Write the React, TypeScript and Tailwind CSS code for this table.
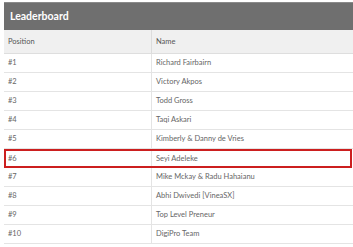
import React from "react";

const rows = [
  "Richard Fairbairn",
  "Victory Akpos",
  "Todd Gross",
  "Taqi Askari",
  "Kimberly & Danny de Vries",
  "Seyi Adeleke",
  "Mike Mckay & Radu Hahaianu",
  "Abhi Dwivedi [VineaSX]",
  "Top Level Preneur",
  "DigiPro Team",
];

const App: React.FC = () => {
  return (
    <div
      className="w-[353px] h-[247px] bg-white pt-[2px] pl-[4px] overflow-hidden"
      style={{ fontFamily: "Lato, 'Open Sans', sans-serif" }}
    >
      <div className="h-[28px] bg-[#6f6f6f] border-t border-[#8a8a8a] flex items-center pl-[6px]">
        <span className="text-white font-bold text-[10.5px]">Leaderboard</span>
      </div>
      <div className="grid grid-cols-[148px_1fr] h-[24px] bg-[#f0f0f0] border-b border-[#dedede] text-[7.5px] text-[#555]">
        <div className="flex items-center pl-[4px] border-r border-[#dcdcdc]">Position</div>
        <div className="flex items-center pl-[4px]">Name</div>
      </div>
      {rows.map((name, index) =>
        index === 5 ? (
          <div
            key={name}
            className="grid grid-cols-[146px_1fr] h-[19px] mr-[1px] border-2 border-[#cc1f1f] text-[7.5px] text-[#666]"
          >
            <div className="flex items-center pl-[2px] border-r border-[#e4e4e4]">#{index + 1}</div>
            <div className="flex items-center pl-[4px]">{name}</div>
          </div>
        ) : (
          <div
            key={name}
            className="grid grid-cols-[148px_1fr] h-[19px] border-b border-[#e4e4e4] text-[7.5px] text-[#666]"
          >
            <div className="flex items-center pl-[4px] border-r border-[#e4e4e4]">#{index + 1}</div>
            <div className="flex items-center pl-[4px]">{name}</div>
          </div>
        )
      )}
    </div>
  );
};

export default App;
